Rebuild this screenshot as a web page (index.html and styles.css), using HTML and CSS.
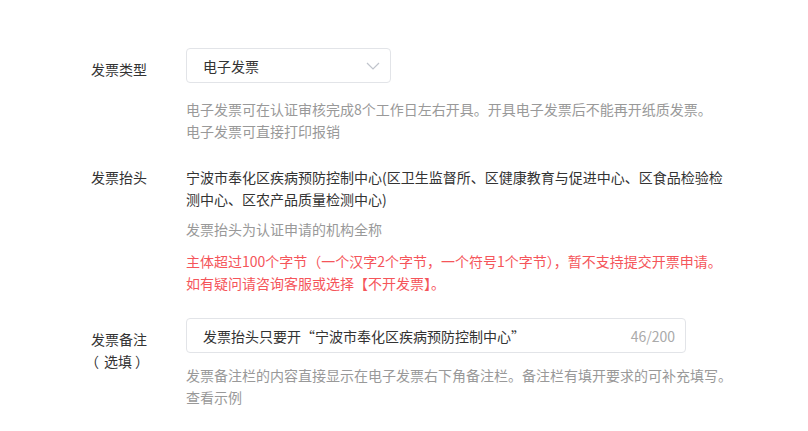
FILE: index.html
```html
<!DOCTYPE html>
<html lang="zh-CN">
<head>
<meta charset="utf-8">
<title>发票信息</title>
<link rel="stylesheet" href="styles.css">
</head>
<body>
<div class="form">
  <div class="row">
    <div class="label label-boxed">发票类型</div>
    <div class="content">
      <div class="select">
        <span class="select-text">电子发票</span>
        <svg class="chevron" width="14" height="8" viewBox="0 0 14 8"><path d="M1 1 L7 7 L13 1" fill="none" stroke="#c0c4cc" stroke-width="1.2"/></svg>
      </div>
      <div class="tip tip-first">电子发票可在认证审核完成8个工作日左右开具。开具电子发票后不能再开纸质发票。<br>电子发票可直接打印报销</div>
    </div>
  </div>

  <div class="row">
    <div class="label">发票抬头</div>
    <div class="content">
      <div class="title-text">宁波市奉化区疾病预防控制中心(区卫生监督所、区健康教育与促进中心、区食品检验检测中心、区农产品质量检测中心)</div>
      <div class="tip tip-gap">发票抬头为认证申请的机构全称</div>
      <div class="warn">主体超过100个字节（一个汉字2个字节，一个符号1个字节），暂不支持提交开票申请。<br>如有疑问请咨询客服或选择【不开发票】。</div>
    </div>
  </div>

  <div class="row">
    <div class="label label-boxed">发票备注<br><span class="paren paren-l">（</span>选填<span class="paren paren-r">）</span></div>
    <div class="content">
      <div class="input">
        <span class="input-text">发票抬头只要开“宁波市奉化区疾病预防控制中心”</span>
        <span class="counter">46/200</span>
      </div>
      <div class="tip tip-remark">发票备注栏的内容直接显示在电子发票右下角备注栏。备注栏有填开要求的可补充填写。<br>查看示例</div>
    </div>
  </div>
</div>
</body>
</html>
```

FILE: styles.css
```css
* { box-sizing: border-box; }
html, body { margin: 0; padding: 0; background: #fff; }
body {
  font-family: "Noto Sans CJK SC", "Noto Sans", sans-serif;
  font-size: 14px;
  color: #333;
  line-height: 22px;
}
.form {
  padding: 48px 0 0 91px;
}
.row {
  display: flex;
  align-items: flex-start;
  margin-bottom: 24px;
}
.label {
  width: 95px;
  flex: none;
  color: #333;
}
.label-boxed {
  padding-top: 10px;
}
.paren {
  font-feature-settings: "halt";
  display: inline-block;
}
.paren-l { margin: 0 5px 0 1px; }
.paren-r { margin-left: 3px; }
.content {
  width: 548px;
  flex: none;
}
.select {
  width: 205px;
  height: 35px;
  border: 1px solid #e2e4e8;
  border-radius: 4px;
  display: flex;
  align-items: center;
  justify-content: space-between;
  padding: 1px 10px 0 16px;
  color: #333;
}
.chevron { display: block; margin-top: -1px; }
.tip {
  color: #999;
}
.tip-first { margin-top: 15px; }
.tip-gap { margin-top: 8px; }
.tip-remark { margin-top: 11px; }
.title-text { color: #333; }
.warn {
  color: #f5555a;
  margin-top: 10px;
}
.input {
  width: 500px;
  height: 35px;
  border: 1px solid #e2e4e8;
  border-radius: 4px;
  display: flex;
  align-items: center;
  justify-content: space-between;
  padding: 1px 10px 0 16px;
}
.input-text { color: #333; }
.counter { color: #aaa; }
```
